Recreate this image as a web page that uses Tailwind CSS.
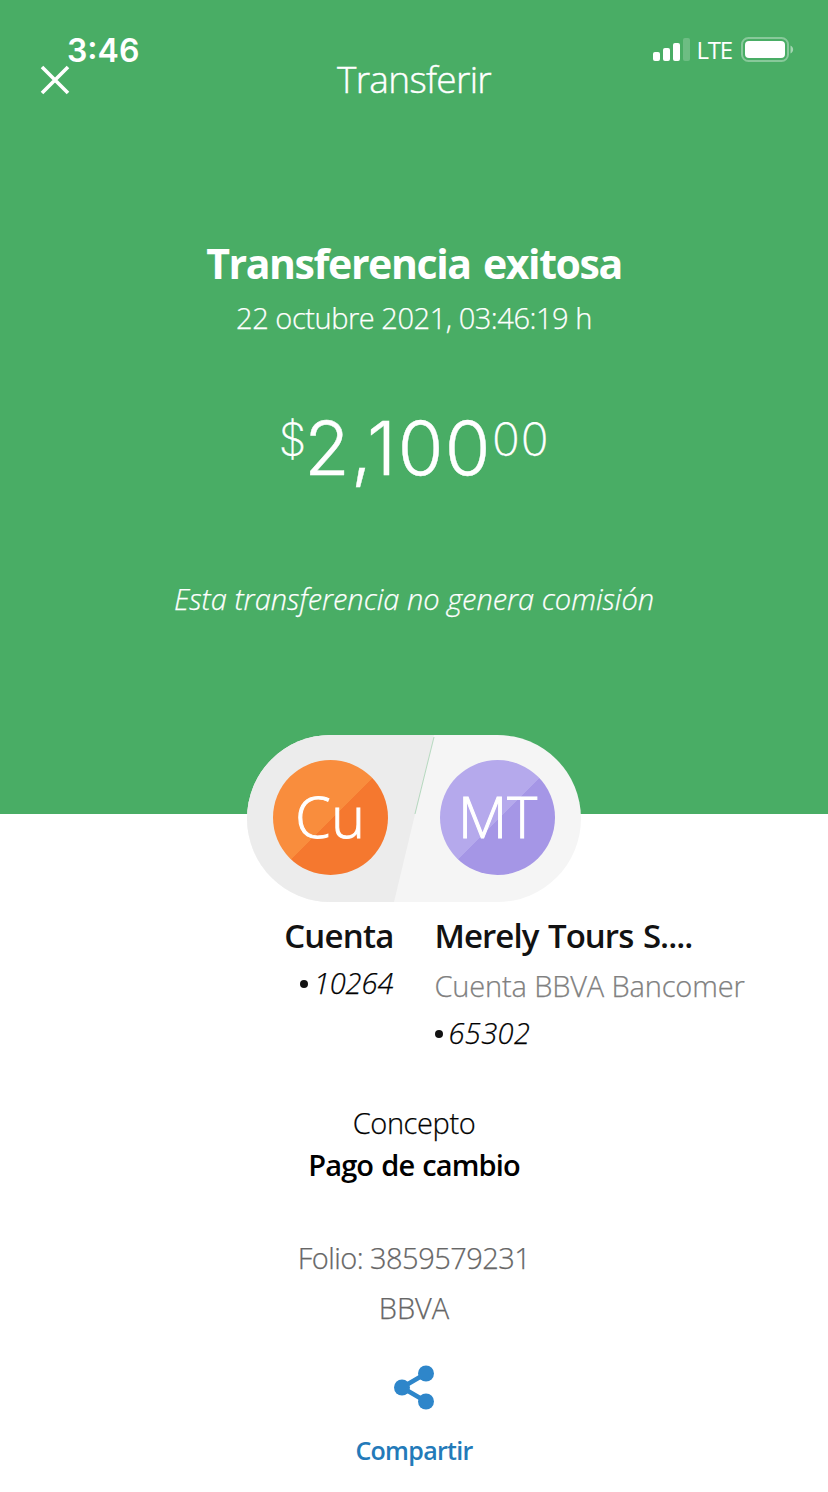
<!DOCTYPE html>
<html lang="es">
  <head>
    <meta charset="UTF-8" />
    <meta name="viewport" content="width=device-width, initial-scale=1" />
    <title>Transferir</title>
    <script src="https://cdn.jsdelivr.net/npm/@tailwindcss/browser@4"></script>
  </head>
  <body class="bg-white font-['Open_Sans',sans-serif] font-light text-black">
    <main class="w-[828px] h-[1492px] overflow-hidden">
      <section class="h-[814px] bg-[#49ad65] text-white text-center">
        <!-- Status bar -->
        <div class="h-[61px] pt-[37px] pl-[67px] pr-[34px] flex justify-between">
          <span class="w-fit h-6 leading-[27px] text-[32px] font-semibold font-['Inter',sans-serif]">3:46</span>
          <div class="flex h-6 items-center">
            <svg class="w-[37px] h-6" viewBox="0 0 37 24" fill="white">
              <rect x="0" y="15" width="7" height="9" rx="2" />
              <rect x="10" y="11" width="7" height="13" rx="2" />
              <rect x="20" y="6" width="7" height="18" rx="2" />
              <rect x="30" y="1" width="7" height="23" rx="2" opacity=".2" />
            </svg>
            <span class="ml-[7px] pt-0.5 leading-6 text-[24px] font-medium tracking-[-1.2px]">LTE</span>
            <svg class="ml-[9px] w-[53px] h-[25px]" viewBox="0 0 53 25" fill="none">
              <rect x="1" y="1" width="46" height="23" rx="6.5" stroke="white" stroke-opacity=".35" stroke-width="2" />
              <rect x="4" y="4" width="40" height="17" rx="4" fill="white" />
              <path d="M49.5 8.5c3.5 1.5 3.5 6.5 0 8z" fill="white" fill-opacity=".5" />
            </svg>
          </div>
        </div>

        <!-- Title bar -->
        <div class="h-9 px-10 grid grid-cols-[30px_1fr_30px] items-center">
          <svg class="mt-0.5 size-[30px]" viewBox="0 0 30 30" stroke="white" stroke-width="3.6">
            <path d="M2 2l26 26M28 2L2 28" />
          </svg>
          <h1 class="leading-[34px] text-[37px] tracking-[-0.7px] [-webkit-text-stroke:0.4px]">Transferir</h1>
        </div>

        <h2 class="mt-[141px] leading-[50px] text-[41px] font-bold tracking-[-1.4px] [word-spacing:3px]">Transferencia exitosa</h2>
        <p class="mt-2.5 leading-10 text-[29px] tracking-[-0.45px] [-webkit-text-stroke:0.25px]">22 octubre 2021, 03:46:19 h</p>
        <p class="mt-[70px] h-20 flex justify-center font-['Inter',sans-serif] [-webkit-text-stroke:0.4px]">
          <span class="-mr-0.5 text-[44px] leading-[62px] font-extralight">$</span>
          <span class="text-[74px] leading-[80px] tracking-[1.5px]">2,100</span>
          <span class="text-[46px] leading-[62px] tracking-[0.8px] font-extralight">00</span>
        </p>
        <p class="mt-[91px] leading-10 text-[29px] italic [-webkit-text-stroke:0.25px]">Esta transferencia no genera comisión</p>
      </section>

      <!-- Origin and destination -->
      <div class="relative -mt-[79px] mx-auto w-[334px] h-[167px] pl-[26px] pt-[25px] flex gap-[52px] text-white text-center text-[57px] [-webkit-text-stroke:1px]">
        <svg class="absolute inset-0 w-[334px] h-[167px]" viewBox="0 0 334 167">
          <rect width="334" height="167" rx="83.5" fill="#f5f5f5" />
          <path d="M83.5 0H187L147 167H83.5A83.5 83.5 0 0 1 83.5 0z" fill="#ececec" />
          <path d="M187 2L168 79" stroke="#49ad65" stroke-width=".6" opacity=".6" />
        </svg>
        <div class="relative size-[115px] leading-[112px] rounded-full bg-[linear-gradient(135deg,#f98d3d_51%,#f5782f_51%)] tracking-[0.8px]">Cu</div>
        <div class="relative size-[115px] leading-[112px] rounded-full bg-[linear-gradient(135deg,#b5a9ec_51%,#a596e6_51%)]">MT</div>
      </div>

      <div class="grid grid-cols-2 gap-x-[41px] pt-3">
        <div class="flex flex-col items-end">
          <p class="leading-[44px] text-[33px] font-semibold tracking-[-0.8px] text-[#121212]">Cuenta</p>
          <p class="mt-[5px] leading-10 text-[29px] italic flex items-center gap-1.5 [-webkit-text-stroke:0.25px]">
            <i class="mt-0.5 size-2 rounded-full bg-[#121212]"></i>10264
          </p>
        </div>
        <div>
          <p class="leading-[44px] text-[33px] font-semibold tracking-[-0.95px] [word-spacing:2px] text-[#121212]">Merely Tours S....</p>
          <p class="mt-2 leading-10 text-[29px] tracking-[-0.15px] text-[#808080] [-webkit-text-stroke:0.25px]">Cuenta BBVA Bancomer</p>
          <p class="mt-[7px] leading-10 text-[29px] tracking-[0.4px] italic flex items-center gap-1.5 [-webkit-text-stroke:0.25px]">
            <i class="mt-0.5 size-2 rounded-full bg-[#121212]"></i>65302
          </p>
        </div>
      </div>

      <div class="mt-[50px] text-center text-[29px] leading-10">
        <p class="tracking-[-0.4px] [-webkit-text-stroke:0.25px]">Concepto</p>
        <p class="mt-0.5 font-semibold tracking-[-0.9px] [word-spacing:1.5px]">Pago de cambio</p>
        <p class="mt-[53px] text-[#666] tracking-[-0.55px] [-webkit-text-stroke:0.25px]">Folio: 3859579231</p>
        <p class="mt-2.5 text-[#666] [-webkit-text-stroke:0.25px]">BBVA</p>
      </div>

      <a class="mt-[37px] flex flex-col items-center text-[#2e86ca]" href="#">
        <svg class="w-[42px] h-[45px]" viewBox="0 0 42 45" fill="currentColor">
          <path d="M9 22.5L33 8.5M9 22.5L33 36.5" stroke="currentColor" stroke-width="4.5" />
          <circle cx="9" cy="22.5" r="8" />
          <circle cx="33" cy="8.5" r="8" />
          <circle cx="33" cy="36.5" r="8" />
        </svg>
        <span class="mt-[22px] leading-9 text-[25px] font-semibold tracking-[-0.7px] text-[#237ab9]">Compartir</span>
      </a>
    </main>
  </body>
</html>
